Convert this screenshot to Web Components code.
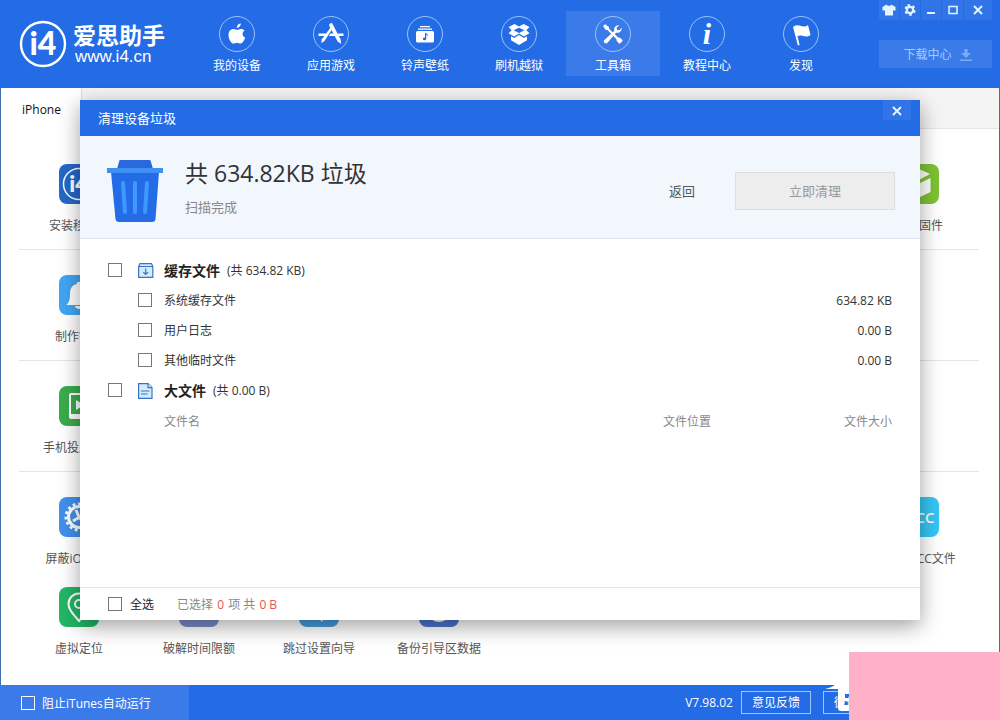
<!DOCTYPE html>
<html lang="zh-CN">
<head>
<meta charset="utf-8">
<title>爱思助手</title>
<style>
  :root {
    --brand: #236ce6;
    --brand-light: #3b7be9;
    --line: #e5e5e5;
  }
  body {
    margin: 0;
    font: 12px/20px "Open Sans", "Noto Sans CJK SC", sans-serif;
    color: #333;
  }
</style>
</head>
<body>
<i4-window></i4-window>

<script>
const define = (name, html) => {
  const template = document.createElement('template');
  template.innerHTML = html;
  customElements.define(name, class extends HTMLElement {
    constructor() {
      super();
      this.attachShadow({ mode: 'open' }).append(template.content.cloneNode(true));
    }
  });
};

/* Square tick box with its label; an icon may stand between the two. */
define('check-field', `
  <style>
    :host { display: block; }
    label { display: flex; align-items: center; gap: var(--check-gap, 12px); }
    .text { padding-top: 2px; }
    input {
      appearance: none; flex: none; box-sizing: border-box; width: 14px; height: 14px; margin: 0;
      border: 1px solid var(--check-line, #777); background: var(--check-fill, #fff);
    }
    input:checked { box-shadow: inset 0 0 0 3px #fff; background: var(--brand); }
  </style>
  <label><input type="checkbox"><slot name="icon"></slot><span class="text"><slot></slot></span></label>`);

define('nav-item', `
  <style>
    :host { display: block; width: 94px; }
    a {
      display: flex; flex-direction: column; align-items: center; gap: 5px;
      padding: 5px 0 1px; color: #fff; line-height: 18px; text-decoration: none;
    }
    :host([active]) a { background: var(--brand-light); }
    .ring {
      box-sizing: border-box; display: flex; width: 36px; height: 36px;
      border: 1px solid #9cc3fb; border-radius: 50%;
    }
    ::slotted(svg) { width: 34px; height: 34px; }
  </style>
  <a href="#"><span class="ring"><slot name="icon"></slot></span><span><slot></slot></span></a>`);

define('i4-logo', `
  <style>
    :host { display: flex; align-items: center; gap: 6px; color: #fff; }
    svg { flex: none; width: 48px; height: 48px; }
    .name { font-size: 23px; line-height: 26px; font-weight: 700; }
    .site { display: block; padding-left: 2px; font: 17px/18px "Liberation Sans", sans-serif; color: #fff; text-decoration: none; }
  </style>
  <svg viewBox="0 0 48 48" aria-hidden="true">
    <circle cx="24" cy="24" r="22" fill="none" stroke="#fff" stroke-width="2.4"/>
    <text x="24" y="35" text-anchor="middle" font-family="Lato" font-weight="900" font-size="32" fill="#fff">i4</text>
  </svg>
  <div><div class="name">爱思助手</div><a class="site" href="#">www.i4.cn</a></div>`);

define('window-controls', `
  <style>
    :host { display: grid; grid-template-columns: 20fr 20fr 20fr 21fr 28fr; gap: 1px; height: 20px; }
    button { padding: 0; border: 0; background: #3174e7; display: flex; align-items: center; justify-content: center; }
    svg { width: 14px; height: 14px; fill: none; stroke: #e4f4ff; stroke-width: 2; }
  </style>
  <button aria-label="皮肤"><svg viewBox="0 0 14 14"><path fill="#e4f4ff" stroke="none" d="M4.500 1.500.5 4v3.500H3V12.500h8V7.500h2.500V4l-4-2.500C8.800 3.200 5.200 3.200 4.500 1.500Z"/></svg></button>
  <button aria-label="设置"><svg viewBox="0 0 14 14"><circle cx="7" cy="7" r="3.200" stroke-width="2.200"/><path stroke-width="2.600" stroke-dasharray="2.600 2.640" d="M4.500 2.670h5L12 7l-2.500 4.330h-5L2 7Z"/></svg></button>
  <button aria-label="最小化"><svg viewBox="0 0 14 14"><path d="M3 10h8"/></svg></button>
  <button aria-label="最大化"><svg viewBox="0 0 14 14"><path stroke-width="1.500" d="M3 3.500h8v7H3Z"/></svg></button>
  <button aria-label="关闭"><svg viewBox="0 0 14 14"><path d="m3 3 8 8m0-8-8 8"/></svg></button>`);

define('app-header', `
  <style>
    :host { display: flex; height: 88px; box-sizing: border-box; background: var(--brand); }
    i4-logo { flex: none; box-sizing: border-box; width: 190px; padding-left: 19px; }
    nav { display: flex; padding-top: 11px; align-items: flex-start; }
    svg { fill: #fff; }
    .side { flex: none; width: 113px; margin: 0 8px 0 auto; display: flex; flex-direction: column; gap: 20px; }
    .download {
      display: flex; align-items: center; justify-content: center; gap: 8px; height: 28px; padding: 2px 0 0 4px;
      border: 0; background: var(--brand-light); color: #a8cafa; font: inherit;
    }
    .download svg { width: 12px; height: 12px; fill: #7cabf3; }
  </style>
  <i4-logo></i4-logo>
  <nav>
    <nav-item>
      <svg slot="icon" viewBox="0 0 34 34"><path d="M20.800 6.500c.2 2.300-1.900 4.400-4 4.300-.2-2.300 1.900-4.200 4-4.300Z"/><path d="M24.600 13.400c-3 1.900-2.500 6 .6 7.200-.8 2.600-2.700 6-4.700 6-1.400 0-1.800-.9-3.500-.9s-2.200.9-3.500.9c-2.400 0-5-5-5-8.700 0-3.800 2.300-6 4.900-6 1.600 0 2.600 1 3.700 1s2.300-1.100 4.200-1c1.400 0 2.600.6 3.300 1.500Z"/></svg>
      我的设备</nav-item>
    <nav-item>
      <svg slot="icon" viewBox="0 0 34 34"><path d="M16 6.500 18 6l8.500 16.300.7 4.600-3.700-2.700L15 8.200Z"/><path d="m18.200 8.200 1.800 1L10.500 24l-3.300 2.200.7-4Z"/><path d="M4.500 16.500h8.500l-1.500 2.600H4.500Zm12 0h3.800l1.300 2.600h-6.700Zm7 0h6v2.600h-4.700Z"/></svg>
      应用游戏</nav-item>
    <nav-item>
      <svg slot="icon" viewBox="0 0 34 34"><path d="M12 9h10v1.300H12ZM10 11.500h14v1.300H10Z"/><path fill-rule="evenodd" d="M9.500 14h15q1.500 0 1.500 1.500v8.500q0 1.500-1.500 1.500h-15Q8 25.500 8 24v-8.500Q8 14 9.500 14Zm7.500 2v4.500a1.700 1.400 0 1 0 1.200 1.600v-4.300c1 .2 1.300.8 1.200 1.800 1.200-2-.4-3.200-2.400-3.600Z"/></svg>
      铃声壁纸</nav-item>
    <nav-item>
      <svg slot="icon" viewBox="0 0 34 34"><path d="m12.500 7 4.500 2.500L21.500 7l6 3-3.200 3.300 3.200 3-5.700 3.200-4.800-3-4.800 3-5.700-3.200 3.200-3L6.500 10Z"/><path fill="#236ce6" d="m17 10.800 5.500 2.500-5.500 2.700-5.500-2.700Z"/><path d="m9 19.300 3.200 1.700 4.800-3 4.800 3 3.200-1.700v4L17 28l-8-4.700Z"/></svg>
      刷机越狱</nav-item>
    <nav-item active>
      <svg slot="icon" viewBox="0 0 34 34"><path d="m7 9 2.200-1.700L13 10v1.800l9.200 8.700c1.300-.2 2.100.3 4.200 2.500.8.900-2.400 4.200-3.400 3.400-2-2-2.800-3-2.500-4.200L11.500 13H9.800Z"/><path d="M25.400 12.900c-1 2.400-3 3.200-5.300 2.800l-8.600 10.100c-1.900 1.900-5-.8-3.100-2.800L18.300 14c-.7-3.200 1.200-6 5-5.800l-2.700 2.500.5 2.200 2.300.3 2.500-2.600Z"/></svg>
      工具箱</nav-item>
    <nav-item>
      <svg slot="icon" viewBox="0 0 34 34"><text x="17" y="27" text-anchor="middle" font-family="Liberation Serif" font-weight="700" font-style="italic" font-size="30">i</text></svg>
      教程中心</nav-item>
    <nav-item>
      <svg slot="icon" viewBox="0 0 34 34"><path d="M9 10c3-2.600 5.500-1.800 8-1 2.800.9 4.800.6 7-1l2.500 10c-2.500 1.800-5 1.800-7.500 1-2-.6-4-.7-5.500.3L15.600 28l-1.700.4Z"/></svg>
      发现</nav-item>
  </nav>
  <div class="side">
    <window-controls></window-controls>
    <button class="download">下载中心
      <svg viewBox="0 0 12 12"><path d="M4.500 0h3v4H11L6 9 1 4h3.500ZM0 10.500h12V12H0Z"/></svg>
    </button>
  </div>`);

define('tab-bar', `
  <style>
    :host { display: flex; height: 41px; box-sizing: border-box; background: linear-gradient(var(--line), var(--line)) 0 100% / 100% 1px no-repeat #f4f4f4; }
    button { box-sizing: border-box; min-width: 81px; padding: 2px 19px 0 20px; border: 0; border-right: 1px solid #dcdcdc; background: #fff; color: #111; font: inherit; }
  </style>
  <button role="tab" aria-selected="true"><slot></slot></button>`);

define('tool-tile', `
  <style>
    :host { display: flex; flex-direction: column; align-items: center; gap: 11px; color: #555; line-height: 22px; white-space: nowrap; }
    .icon { display: flex; width: 40px; height: 40px; border-radius: 8px; background: var(--tile); overflow: hidden; }
    ::slotted(svg) { width: 40px; height: 40px; }
  </style>
  <div class="icon"><slot name="icon"></slot></div>
  <div><slot></slot></div>`);

define('tool-group', `
  <style>
    :host { display: grid; grid-template-columns: repeat(8, 1fr); row-gap: 17px; padding: 25px 0 12px; border-bottom: 1px solid var(--line); }
    :host(:last-of-type) { border-bottom: 0; }
  </style>
  <slot></slot>`);

define('tool-box', `
  <style>
    :host { display: block; padding: 10px 20px 0 18px; }
    .last { grid-column: 8; }
    svg { fill: none; stroke: #fff; stroke-width: 2; }
  </style>
  <tool-group>
    <tool-tile style="--tile:#2468c9">
      <svg slot="icon" viewBox="0 0 40 40"><circle cx="20" cy="20" r="15.500" stroke-width="1.500"/><text x="20" y="28" text-anchor="middle" font-family="Lato" font-weight="900" font-size="23" fill="#fff" stroke="none">i4</text></svg>
      安装移动端</tool-tile>
    <tool-tile class="last" style="--tile:#7ec234">
      <svg slot="icon" viewBox="0 0 40 40"><g fill="#fff" stroke="none"><path d="m20 5 11 5-11 6L9 10Z"/><path d="m8 13 11 5v15L8 28Z"/><path d="m21 19 10.500-5v14L21 33Z"/></g></svg>
      下载固件</tool-tile>
  </tool-group>
  <tool-group>
    <tool-tile style="--tile:#42a5f3">
      <svg slot="icon" viewBox="0 0 40 40"><g fill="#fff" stroke="none"><path d="M18 7h4v2c6 1 7 6 7 11 0 5 1 7 3.500 10h-25c2.500-3 3.500-5 3.500-10 0-5 1-10 7-11Z"/><path d="M16 31h8c-1 4-7 4-8 0Z"/></g></svg>
      制作铃声</tool-tile>
  </tool-group>
  <tool-group>
    <tool-tile style="--tile:#39ad4b">
      <svg slot="icon" viewBox="0 0 40 40"><rect x="11" y="8" width="18" height="24" rx="1"/><path fill="#fff" stroke="none" d="m17 14 8 5-8 5ZM11 28h18v4H11Z"/></svg>
      手机投屏直播</tool-tile>
  </tool-group>
  <tool-group>
    <tool-tile style="--tile:#4290ec">
      <svg slot="icon" viewBox="0 0 40 40"><circle cx="20" cy="20" r="10.500" stroke-width="3"/><circle cx="20" cy="20" r="13" stroke-width="3" stroke-dasharray="2.800 2.645"/><path stroke-width="3" d="m14 24 12-7m-9-4 3 7 5 6"/></svg>
      屏蔽iOS更新</tool-tile>
    <tool-tile class="last" style="--tile:#36c5f5">
      <svg slot="icon" viewBox="0 0 40 40"><text x="19" y="26" text-anchor="middle" font-family="Open Sans" font-weight="600" font-size="15" fill="#fff" stroke="none">IPCC</text></svg>
      下载IPCC文件</tool-tile>
    <tool-tile style="--tile:#22b765">
      <svg slot="icon" viewBox="0 0 40 40"><path d="M20 34C14 27 9.500 22.500 9.500 17a10.500 10.500 0 0 1 21 0C30.500 22.500 26 27 20 34Z"/><circle cx="20" cy="17" r="4"/></svg>
      虚拟定位</tool-tile>
    <tool-tile style="--tile:#7d8cc8">
      <svg slot="icon" viewBox="0 0 40 40"><circle cx="20" cy="18" r="9"/><path d="M20 12v6l4 3"/></svg>
      破解时间限额</tool-tile>
    <tool-tile style="--tile:#459de0">
      <svg slot="icon" viewBox="0 0 40 40"><path d="m14 14 8 8-8 8m10-12 6 8-8 8"/></svg>
      跳过设置向导</tool-tile>
    <tool-tile style="--tile:#4c74d2">
      <svg slot="icon" viewBox="0 0 40 40"><path d="M11 10h18v18q-2 6-9 6t-9-6Z"/></svg>
      备份引导区数据</tool-tile>
  </tool-group>`);

define('status-bar', `
  <style>
    :host { display: flex; align-items: stretch; height: 35px; background: var(--brand); color: #fff; }
    check-field { display: flex; width: 168px; padding-left: 21px; background: var(--brand-light); --check-line: #fff; --check-fill: transparent; --check-gap: 7px; }
    .right { margin-left: auto; display: flex; align-items: center; gap: 12px; padding-right: 95px; }
    .version { margin-right: -4px; }
    button { height: 23px; padding: 0 10px; border: 1px solid #9cc9fb; background: none; color: #fff; font: inherit; line-height: 20px; }
  </style>
  <check-field>阻止iTunes自动运行</check-field>
  <div class="right">
    <span class="version">V7.98.02</span>
    <button>意见反馈</button>
    <button>微信公众号</button>
  </div>`);

define('scan-summary', `
  <style>
    :host { display: flex; align-items: center; gap: 21px; box-sizing: border-box; height: 103px; padding: 0 25px 0 26px; background: #f2f6fd; border-bottom: 1px solid #dfe5ee; }
    svg { flex: none; width: 58px; height: 64px; margin-top: 8px; }
    h2 { margin: 0; font-size: 23px; line-height: 32px; font-weight: 400; color: #333; }
    p { margin: 8px 0 0; font-size: 13px; line-height: 20px; color: #888; }
    .actions { margin-left: auto; display: flex; align-items: center; gap: 40px; margin-top: 8px; }
    button { font: inherit; font-size: 13px; }
    .back { padding: 0; border: 0; background: none; color: #555; }
    .clean { width: 160px; height: 38px; border: 1px solid #ddd; background: #ededed; color: #999; }
  </style>
  <svg viewBox="0 0 58 64" aria-hidden="true">
    <path fill="#2869dc" d="M14 1h30q.6 0 1 2l2 7H11l2-7Q13.400 1 14 1Z"/>
    <path fill="#246ce6" d="M5 13h48l-3.500 47q-.3 3-3.500 3H13q-3 0-3.500-3Z"/>
    <path fill="#3e90f5" d="M1 9h56v5H1Z"/>
    <path fill="none" stroke="#3e98ff" stroke-width="4" stroke-linecap="round" d="m17 24 2 29m10-29v29m12-29-2 29"/>
  </svg>
  <div>
    <h2>共 634.82KB 垃圾</h2>
    <p>扫描完成</p>
  </div>
  <div class="actions">
    <button class="back">返回</button>
    <button class="clean" disabled>立即清理</button>
  </div>`);

define('group-head', `
  <style>
    :host { display: flex; align-items: center; height: 30px; --check-gap: 16px; }
    .title { display: flex; align-items: center; gap: 10px; font-size: 14px; font-weight: 700; color: #222; }
    ::slotted(svg) { width: 16px; height: 16px; }
    .count { margin-left: 7px; padding-top: 2px; }
  </style>
  <check-field><span class="title"><slot name="icon"></slot><slot></slot></span></check-field>
  <span class="count"><slot name="count"></slot></span>`);

define('file-row', `
  <style>
    :host { display: flex; align-items: center; justify-content: space-between; height: 30px; padding-left: 30px; }
    .size { padding-top: 2px; }
  </style>
  <check-field><slot></slot></check-field>
  <span class="size"><slot name="size"></slot></span>`);

define('file-list', `
  <style>
    :host { display: block; padding: 16px 28px 0; }
    svg { fill: #d5eaff; stroke: #3874c4; stroke-width: 1.200; }
    table { width: 100%; border-spacing: 0; color: #888; }
    th { height: 30px; padding: 2px 0 0; font-weight: 400; text-align: left; }
    th:first-child { padding-left: 56px; }
    th:nth-child(2) { width: 181px; }
    th:last-child { width: 48px; text-align: right; }
  </style>
  <group-head>
    <svg slot="icon" viewBox="0 0 16 16"><path d="M.6 3.500h14.200v10.900H.6ZM.6 3.500 2 .6h11.500l1.300 2.900"/><path d="M7.700 5.500v6m-2.400-2.400 2.400 2.400 2.400-2.400"/></svg>
    缓存文件<span slot="count">(共 634.82 KB)</span>
  </group-head>
  <file-row>系统缓存文件<span slot="size">634.82 KB</span></file-row>
  <file-row>用户日志<span slot="size">0.00 B</span></file-row>
  <file-row>其他临时文件<span slot="size">0.00 B</span></file-row>
  <group-head>
    <svg slot="icon" viewBox="0 0 16 16"><path d="M.6.6h9.400l4 4v10.800H.6Z"/><path d="M10 .6v4h4M3 8h8.500M3 11h6.500"/></svg>
    大文件<span slot="count">(共 0.00 B)</span>
  </group-head>
  <table>
    <thead><tr><th scope="col">文件名</th><th scope="col">文件位置</th><th scope="col">文件大小</th></tr></thead>
  </table>`);

define('clean-dialog', `
  <style>
    :host { display: flex; flex-direction: column; width: 84%; min-height: 520px; background: #fff; box-shadow: 0 6px 20px rgba(0, 0, 0, .38); }
    header { display: flex; align-items: flex-start; justify-content: space-between; height: 36px; padding: 0 9px 0 18px; background: var(--brand); color: #fff; }
    h1 { margin: 0; font-size: 13px; line-height: 36px; font-weight: 400; }
    .close { display: flex; align-items: center; justify-content: center; width: 28px; height: 20px; padding: 0; border: 0; background: #3174e7; }
    .close svg { width: 10px; height: 10px; margin-top: 2px; fill: none; stroke: #e4f4ff; stroke-width: 2; }
    file-list { flex: 1; }
    footer { display: flex; align-items: center; gap: 23px; height: 32px; padding: 0 28px; border-top: 1px solid var(--line); color: #888; --check-gap: 8px; }
    footer span { padding-top: 2px; }
    check-field { color: #222; }
    b { margin: 0 1px; font-weight: 400; color: #e35454; }
  </style>
  <header>
    <h1>清理设备垃圾</h1>
    <button class="close" aria-label="关闭"><svg viewBox="0 0 10 10"><path d="m1 1 8 8m0-8-8 8"/></svg></button>
  </header>
  <scan-summary></scan-summary>
  <file-list></file-list>
  <footer>
    <check-field>全选</check-field>
    <span>已选择 <b>0</b> 项 共 <b>0 B</b></span>
  </footer>`);

/* Promo patch that lies over the bottom right corner of the window. */
define('corner-patch', `
  <style>
    :host { display: flex; align-items: flex-end; height: 68px; }
    svg { width: 24px; height: 40px; }
    div { width: 151px; height: 68px; background: #ffb1c7; }
  </style>
  <svg viewBox="0 0 24 40" aria-hidden="true"><path fill="#fff" fill-rule="evenodd" d="M0 9c5-1 9-3 13-6h11v11h-4v4h4v13H16q-3 0-3-3V9ZM19 21h5v4h-5Z"/></svg>
  <div></div>`);

define('i4-window', `
  <style>
    :host { position: relative; display: flex; flex-direction: column; min-height: 100vh; background: #fff; overflow: hidden; }
    main { flex: 1; border: solid #3e6db0; border-width: 0 1px; }
    .overlay { position: absolute; inset: 0; display: flex; align-items: center; justify-content: center; }
    corner-patch { position: absolute; right: 0; bottom: 0; }
  </style>
  <app-header></app-header>
  <main>
    <tab-bar>iPhone</tab-bar>
    <tool-box></tool-box>
  </main>
  <status-bar></status-bar>
  <div class="overlay"><clean-dialog role="dialog" aria-label="清理设备垃圾"></clean-dialog></div>
  <corner-patch></corner-patch>`);
</script>
</body>
</html>
